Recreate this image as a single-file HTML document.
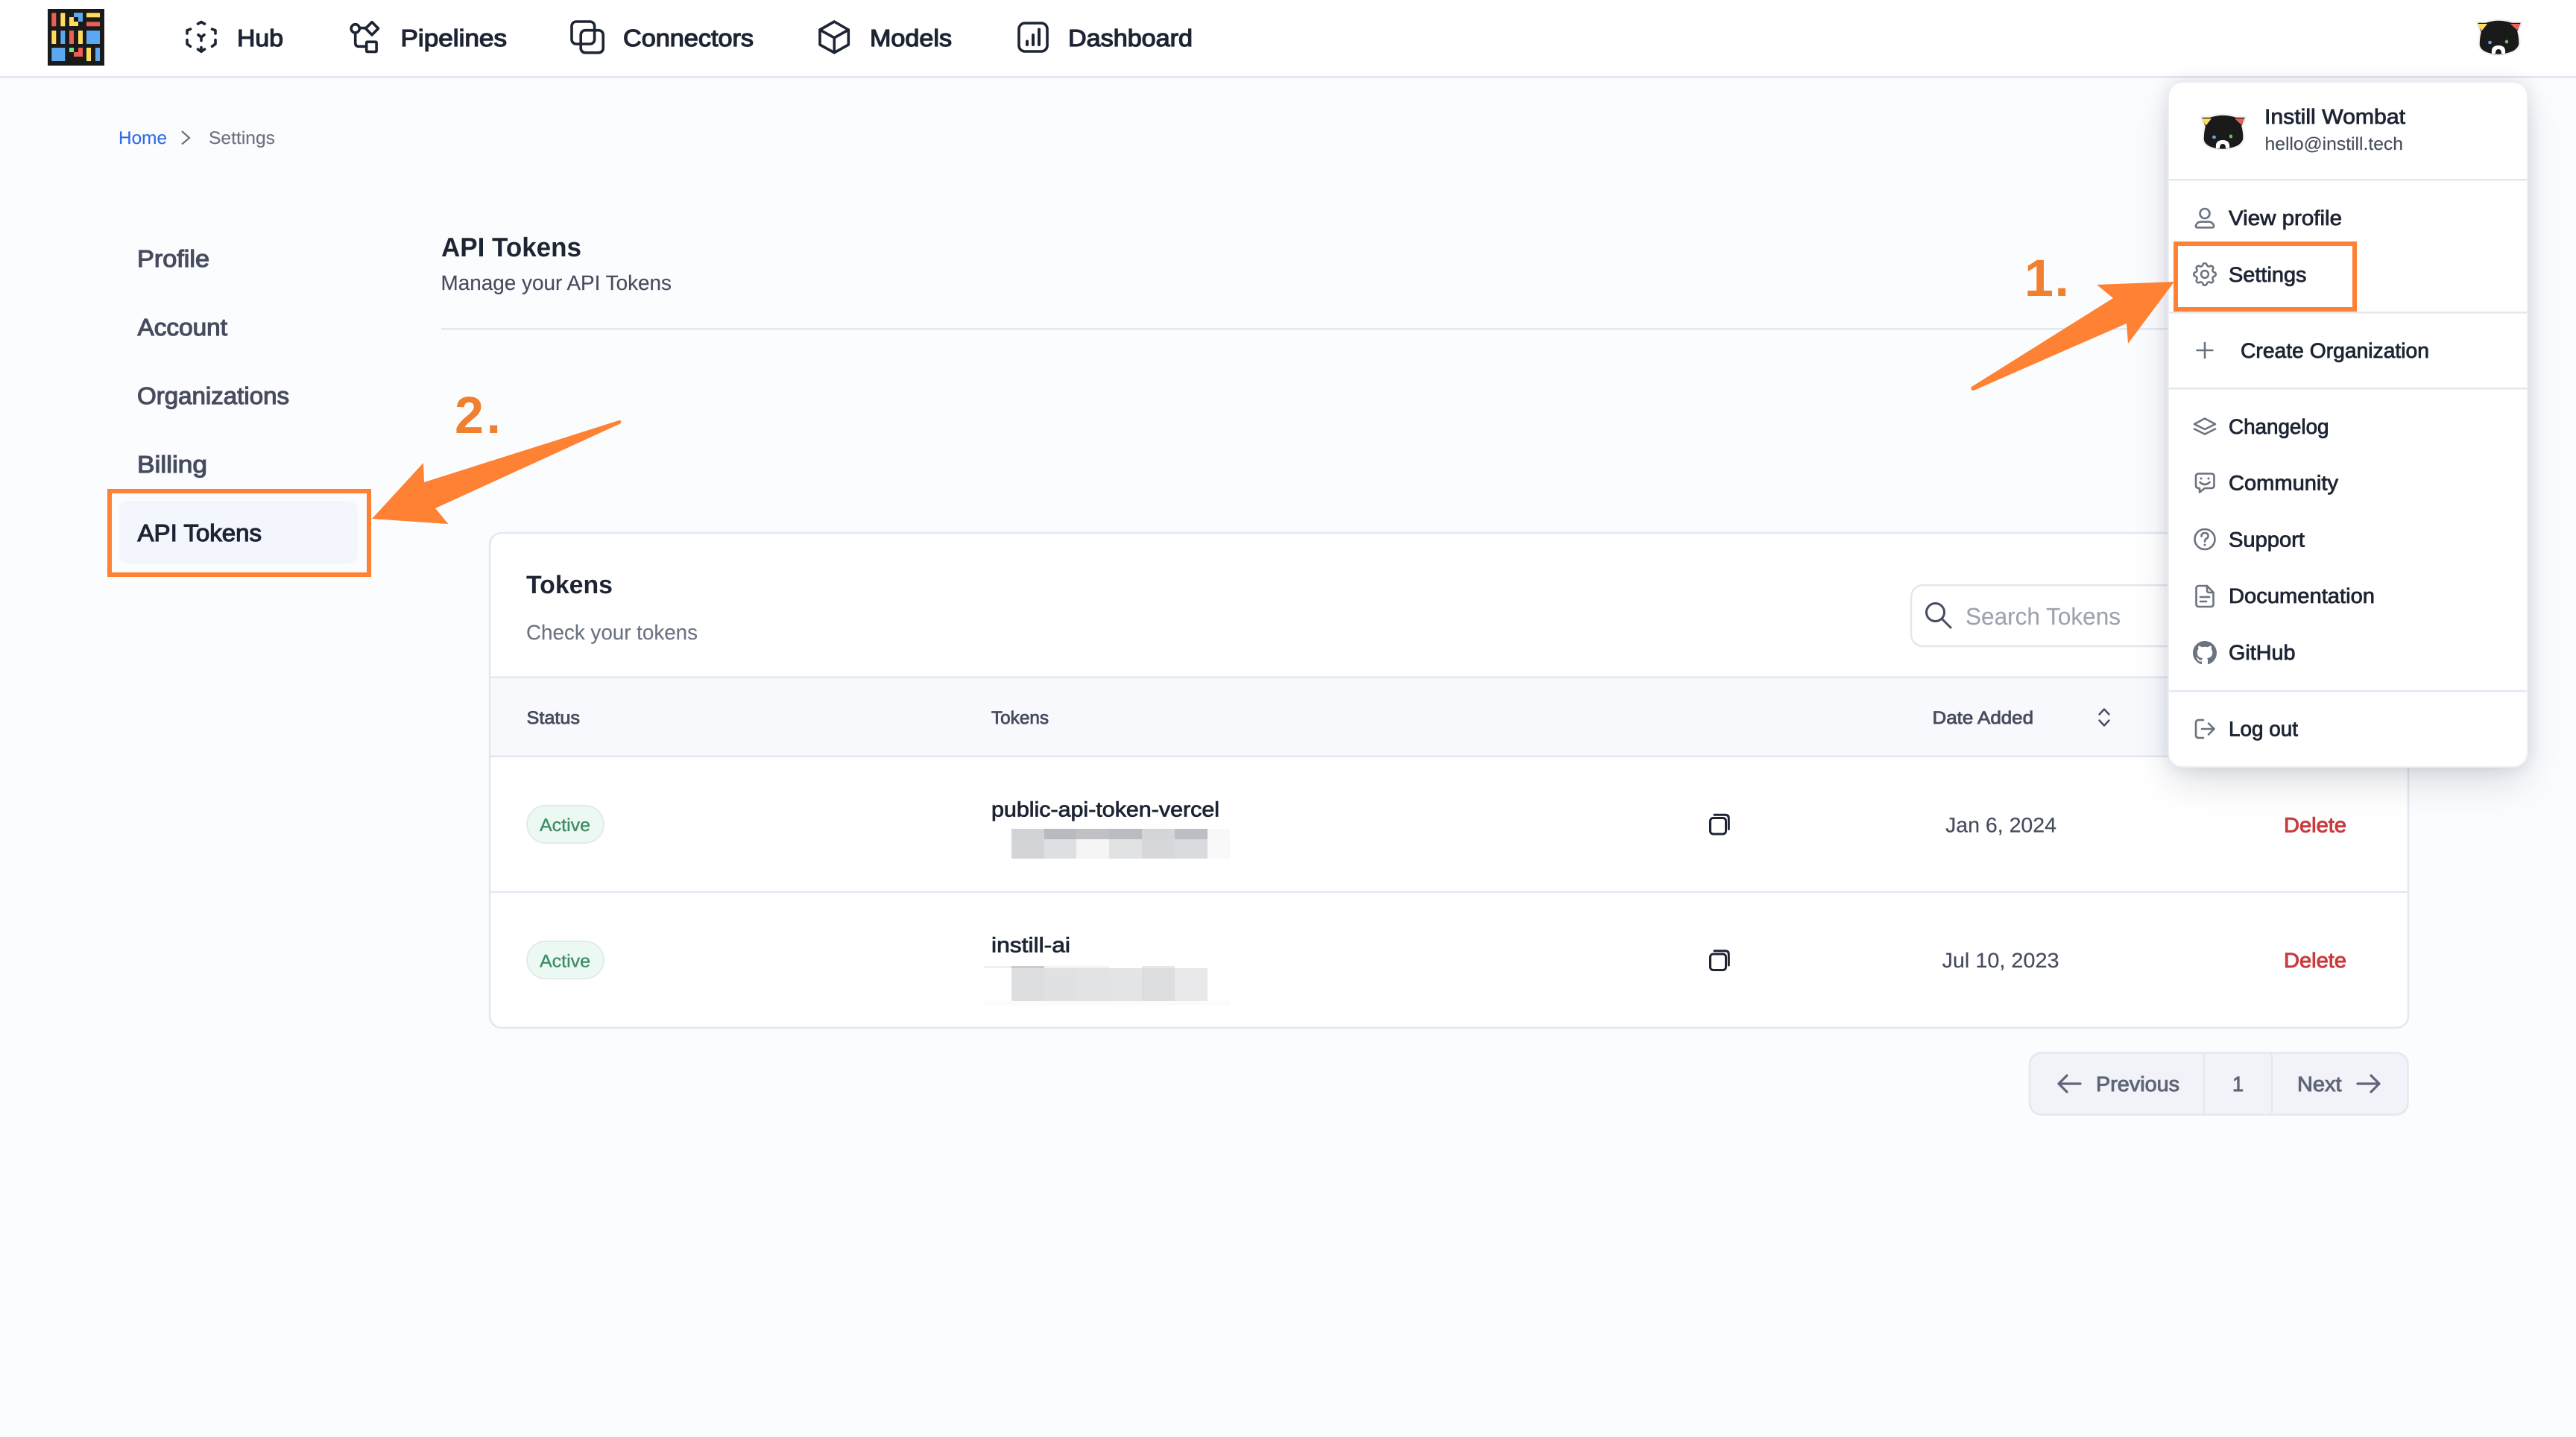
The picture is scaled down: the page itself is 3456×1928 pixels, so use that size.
<!DOCTYPE html>
<html lang="en">
<head>
<meta charset="utf-8">
<title>API Tokens</title>
<style>
html,body{margin:0;padding:0;width:3456px;height:1928px;overflow:hidden;background:#FBFCFE}
svg{position:absolute;left:0;top:0;display:block}
text{font-family:"Liberation Sans",sans-serif;text-rendering:geometricPrecision}
.nav{font-size:32px;fill:#1D2433;stroke:#1D2433;stroke-width:1.25}
.side{font-size:32px;fill:#464C5E;stroke:#464C5E;stroke-width:1.15}
.dark{font-size:32px;fill:#1D2433;stroke:#1D2433;stroke-width:1.15}
.crumb{font-size:24px;stroke-width:.15}
.h1{font-size:36px;font-weight:bold;fill:#1D2433}
.h2{font-size:34px;font-weight:bold;fill:#1D2433}
.sub{font-size:28px;fill:#464C5E;stroke:#464C5E;stroke-width:.15}
.th{font-size:24px;fill:#464C5E;stroke:#464C5E;stroke-width:.8}
.item{font-size:28px;fill:#1D2433;stroke:#1D2433;stroke-width:.8}
.date{font-size:28px;fill:#464C5E;stroke:#464C5E;stroke-width:.2}
.del{font-size:28px;fill:#C93A3F;stroke:#C93A3F;stroke-width:.95}
.act{font-size:24px;fill:#3C8C65;stroke:#3C8C65;stroke-width:.35}
.pg{font-size:28px;fill:#5F6577;stroke:#5F6577;stroke-width:.95}
.num{font-size:70px;font-weight:bold;fill:#F08030}
.ic{fill:none;stroke:#1D2433;stroke-width:3.6;stroke-linecap:round;stroke-linejoin:round}
.dd{fill:none;stroke:#6B7280;stroke-width:2.6;stroke-linecap:round;stroke-linejoin:round}
#panel{position:absolute;left:2908px;top:109px;width:484px;height:921px;box-sizing:border-box;background:#fff;border:2px solid #ECEEF3;border-radius:20px;box-shadow:0 22px 50px -6px rgba(30,40,70,.17),0 0 22px rgba(30,40,70,.11)}
</style>
</head>
<body>
<svg width="3456" height="1928" viewBox="0 0 3456 1928" xmlns="http://www.w3.org/2000/svg">
  <!-- Nav bar -->
  <rect x="0" y="0" width="3456" height="102" fill="#fff"/>
  <rect x="0" y="102" width="3456" height="2.5" fill="#E3E6EF"/>

  <!-- Logo -->
  <g transform="translate(64,12)">
    <rect width="76" height="76" fill="#1A1A1A"/>
    <rect x="5.3" y="5.3" width="6" height="18" fill="#EB5F54"/>
    <rect x="17.3" y="5.3" width="6" height="18" fill="#FFDD5C"/>
    <path d="M29 11h6v6h6v-6h-6V5h12v12h-6v6H29z" fill="#FFDD5C"/>
    <path d="M35 5h12v12H41v-6h-6z" fill="#5CA8F0"/>
    <rect x="35" y="11" width="6" height="6" fill="#1A1A1A"/>
    <rect x="52" y="5.3" width="18" height="6" fill="#FFDD5C"/>
    <rect x="52" y="17.3" width="18" height="6" fill="#EB5F54"/>
    <rect x="5.3" y="29" width="6" height="18" fill="#FFDD5C"/>
    <rect x="17.3" y="29" width="6" height="18" fill="#5CA8F0"/>
    <rect x="29" y="29" width="6" height="18" fill="#EB5F54"/>
    <rect x="41" y="29" width="6" height="18" fill="#FFDD5C"/>
    <rect x="52" y="29" width="18" height="18" fill="#5CA8F0"/>
    <rect x="5.3" y="52" width="18" height="18" fill="#5CA8F0"/>
    <rect x="29" y="52" width="6" height="6" fill="#72EB87"/>
    <path d="M41 52h6v12H35v-6h6z" fill="#EB5F54"/>
    <rect x="52" y="52" width="6" height="18" fill="#FFDD5C"/>
    <rect x="64" y="52" width="6" height="18" fill="#5CA8F0"/>
  </g>

  <!-- Nav icons -->
  <g class="ic">
    <path d="M266 46.7L270 50L274 46.7M270 50V54.5"/>
    <path d="M265.5 32L270 29.5L274.5 32"/>
    <path d="M251 45V40.8L255.5 39"/>
    <path d="M284.5 39L289 40.8V45"/>
    <path d="M251 53.5V59L255.5 62.3"/>
    <path d="M284.5 62.3L289 59V53.5"/>
    <path d="M265.5 66L270 69.3L274.5 66M270 63.5V69"/>
  </g>
  <g class="ic">
    <circle cx="476.7" cy="38.3" r="5.6"/>
    <path d="M482.3 37.6H490.5"/>
    <path d="M499 29.6L507.5 38.2L499 46.8L490.5 38.2Z"/>
    <path d="M476.7 44V57.5Q476.7 62.3 481.5 62.3H491.5"/>
    <rect x="491.7" y="56.2" width="13.4" height="13.2" rx="1"/>
  </g>
  <g class="ic">
    <rect x="767" y="29" width="30.6" height="30" rx="6"/>
    <rect x="779.2" y="40.7" width="30" height="30" rx="6"/>
  </g>
  <g class="ic">
    <path d="M1119.3 29L1138.3 40V60L1119.3 70.7L1100 60V40Z"/>
    <path d="M1100 40L1119.3 50.7L1138.3 40M1119.3 50.7V70.7"/>
  </g>
  <g class="ic">
    <rect x="1367" y="31" width="38" height="38" rx="8"/>
    <path d="M1378 55.5V60M1386 47V60M1394 39.5V60" stroke-width="4"/>
  </g>

  <!-- Nav labels -->
  <text class="nav" x="318" y="62" textLength="62" lengthAdjust="spacingAndGlyphs">Hub</text>
  <text class="nav" x="537.5" y="62" textLength="142.5" lengthAdjust="spacingAndGlyphs">Pipelines</text>
  <text class="nav" x="836" y="62" textLength="175" lengthAdjust="spacingAndGlyphs">Connectors</text>
  <text class="nav" x="1167" y="62" textLength="110" lengthAdjust="spacingAndGlyphs">Models</text>
  <text class="nav" x="1433" y="62" textLength="167" lengthAdjust="spacingAndGlyphs">Dashboard</text>

  <!-- Breadcrumb -->
  <text class="crumb" x="159" y="193" fill="#2F6BE8" stroke="#2F6BE8" textLength="65" lengthAdjust="spacingAndGlyphs">Home</text>
  <path d="M244 176L254 185L244 193.5" fill="none" stroke="#6B7280" stroke-width="2.2"/>
  <text class="crumb" x="280" y="193" fill="#6B7280" stroke="#6B7280" textLength="89" lengthAdjust="spacingAndGlyphs">Settings</text>

  <!-- Sidebar -->
  <rect x="160" y="672" width="320" height="84" rx="12" fill="#F3F6FD"/>
  <text class="side" x="184" y="358" textLength="97" lengthAdjust="spacingAndGlyphs">Profile</text>
  <text class="side" x="184.5" y="450" textLength="120.5" lengthAdjust="spacingAndGlyphs">Account</text>
  <text class="side" x="184" y="542" textLength="204" lengthAdjust="spacingAndGlyphs">Organizations</text>
  <text class="side" x="184" y="634" textLength="94" lengthAdjust="spacingAndGlyphs">Billing</text>
  <text class="dark" x="184.5" y="726" textLength="166.5" lengthAdjust="spacingAndGlyphs">API Tokens</text>

  <!-- Page head -->
  <text class="h1" x="592" y="344" textLength="188" lengthAdjust="spacingAndGlyphs">API Tokens</text>
  <text class="sub" x="591.5" y="389" textLength="309.5" lengthAdjust="spacingAndGlyphs">Manage your API Tokens</text>
  <rect x="592" y="440" width="2320" height="2.5" fill="#E3E7F0"/>

  <!-- Card -->
  <rect x="657" y="715" width="2574" height="664" rx="16" fill="#fff" stroke="#E3E7F0" stroke-width="2.5"/>
  <text class="h2" x="706" y="796" textLength="116" lengthAdjust="spacingAndGlyphs">Tokens</text>
  <text class="sub" x="706" y="858" style="fill:#6B7280;stroke:#6B7280" textLength="230" lengthAdjust="spacingAndGlyphs">Check your tokens</text>

  <rect x="2564" y="785" width="400" height="82" rx="16" fill="#fff" stroke="#E3E7F0" stroke-width="2.5"/>
  <circle cx="2596.5" cy="821.5" r="12" fill="none" stroke="#464C5E" stroke-width="3"/>
  <path d="M2605.5 830.5L2617 842" stroke="#464C5E" stroke-width="3" stroke-linecap="round"/>
  <text x="2637" y="838" font-size="32" fill="#9CA3AF" stroke="#9CA3AF" stroke-width=".15" textLength="208" lengthAdjust="spacingAndGlyphs">Search Tokens</text>

  <rect x="658.5" y="908.5" width="2571" height="106" fill="#F7F9FD"/>
  <rect x="658" y="907.5" width="2572" height="2.5" fill="#E3E7F0"/>
  <rect x="658" y="1013.5" width="2572" height="2.5" fill="#E3E7F0"/>
  <rect x="658" y="1195.5" width="2572" height="2.5" fill="#E3E7F0"/>

  <text class="th" x="706.5" y="971" textLength="71.5" lengthAdjust="spacingAndGlyphs">Status</text>
  <text class="th" x="1330" y="971" textLength="77" lengthAdjust="spacingAndGlyphs">Tokens</text>
  <text class="th" x="2592.5" y="971" textLength="135.5" lengthAdjust="spacingAndGlyphs">Date Added</text>
  <path d="M2816.5 958.5L2823 951.5L2829.5 958.5M2816.5 966.5L2823 973.5L2829.5 966.5" fill="none" stroke="#464C5E" stroke-width="2.4" stroke-linecap="round" stroke-linejoin="round"/>

  <!-- Row 1 -->
  <rect x="707" y="1081" width="103" height="50" rx="25" fill="#ECF9F3" stroke="#E3E9EC" stroke-width="2"/>
  <text class="act" x="724" y="1115" textLength="68" lengthAdjust="spacingAndGlyphs">Active</text>
  <text class="item" x="1330" y="1095.5" textLength="306" lengthAdjust="spacingAndGlyphs">public-api-token-vercel</text>
  <g>
    <rect x="1357" y="1112" width="44" height="14" fill="#D1D2D6"/>
    <rect x="1401" y="1112" width="43" height="14" fill="#B9BABF"/>
    <rect x="1444" y="1112" width="44" height="14" fill="#C0C1C5"/>
    <rect x="1488" y="1112" width="44" height="14" fill="#BBBCC1"/>
    <rect x="1532" y="1112" width="44" height="14" fill="#D4D5D8"/>
    <rect x="1576" y="1112" width="44" height="14" fill="#BDBEC3"/>
    <rect x="1620" y="1112" width="30" height="14" fill="#F8F8F9"/>
    <rect x="1357" y="1126" width="44" height="26" fill="#D3D4D7"/>
    <rect x="1401" y="1126" width="43" height="26" fill="#DEDFE2"/>
    <rect x="1444" y="1126" width="44" height="26" fill="#F5F5F6"/>
    <rect x="1488" y="1126" width="44" height="26" fill="#E1E2E4"/>
    <rect x="1532" y="1126" width="44" height="26" fill="#D6D7DA"/>
    <rect x="1576" y="1126" width="44" height="26" fill="#DADBDE"/>
    <rect x="1620" y="1126" width="30" height="26" fill="#F9F9FA"/>
  </g>
  <g fill="none" stroke="#1D2433" stroke-width="3" stroke-linecap="round">
    <rect x="2294.5" y="1097.5" width="21" height="21.5" rx="4"/>
    <path d="M2300 1093.3H2314.5Q2319.3 1093.3 2319.3 1098V1112.5"/>
  </g>
  <text class="date" x="2610" y="1116.5" textLength="149" lengthAdjust="spacingAndGlyphs">Jan 6, 2024</text>
  <text class="del" x="3064" y="1116.5" textLength="84" lengthAdjust="spacingAndGlyphs">Delete</text>

  <!-- Row 2 -->
  <rect x="707" y="1263" width="103" height="50" rx="25" fill="#ECF9F3" stroke="#E3E9EC" stroke-width="2"/>
  <text class="act" x="724" y="1297.5" textLength="68" lengthAdjust="spacingAndGlyphs">Active</text>
  <text class="item" x="1330" y="1277.5" textLength="106" lengthAdjust="spacingAndGlyphs">instill-ai</text>
  <g>
    <rect x="1320" y="1296" width="37" height="3" fill="#F0F0F1"/>
    <rect x="1357" y="1296" width="44" height="3" fill="#C9CACD"/>
    <rect x="1401" y="1296" width="87" height="3" fill="#F3F3F4"/>
    <rect x="1532" y="1296" width="44" height="3" fill="#E6E7E9"/>
    <rect x="1357" y="1299" width="44" height="44" fill="#DDDEE0"/>
    <rect x="1401" y="1299" width="43" height="44" fill="#E0E1E3"/>
    <rect x="1444" y="1299" width="44" height="44" fill="#E2E3E5"/>
    <rect x="1488" y="1299" width="44" height="44" fill="#E3E4E6"/>
    <rect x="1532" y="1299" width="44" height="44" fill="#DCDDDF"/>
    <rect x="1576" y="1299" width="44" height="44" fill="#E9E9EB"/>
    <rect x="1320" y="1343" width="330" height="6" fill="#FBFBFC"/>
  </g>
  <g fill="none" stroke="#1D2433" stroke-width="3" stroke-linecap="round">
    <rect x="2294.5" y="1280" width="21" height="21.5" rx="4"/>
    <path d="M2300 1275.8H2314.5Q2319.3 1275.8 2319.3 1280.5V1295"/>
  </g>
  <text class="date" x="2605.5" y="1298" textLength="157" lengthAdjust="spacingAndGlyphs">Jul 10, 2023</text>
  <text class="del" x="3064" y="1298" textLength="84" lengthAdjust="spacingAndGlyphs">Delete</text>

  <!-- Pagination -->
  <rect x="2723" y="1412.5" width="507.5" height="83" rx="16" fill="#F1F3F9" stroke="#E3E7F0" stroke-width="2.5"/>
  <rect x="2956" y="1413" width="2" height="82" fill="#E3E7F0"/>
  <rect x="3047" y="1413" width="2" height="82" fill="#E3E7F0"/>
  <path d="M2791 1454H2762M2773 1443L2762 1454L2773 1465" fill="none" stroke="#5F6577" stroke-width="3.2" stroke-linecap="round" stroke-linejoin="round"/>
  <text class="pg" x="2812" y="1464" textLength="112" lengthAdjust="spacingAndGlyphs">Previous</text>
  <text class="pg" x="2995" y="1464" textLength="15" lengthAdjust="spacingAndGlyphs">1</text>
  <text class="pg" x="3082" y="1464" textLength="59.5" lengthAdjust="spacingAndGlyphs">Next</text>
  <path d="M3163 1454H3192M3181 1443L3192 1454L3181 1465" fill="none" stroke="#5F6577" stroke-width="3.2" stroke-linecap="round" stroke-linejoin="round"/>

  <!-- Header avatar -->
  <g transform="translate(3321,25)">
    <path d="M1.5 4.5L14 4.5Q23 1.5 31 1.5Q40 1.5 49 4.5L62.5 4.5L57.5 17Q60 27 59.5 35Q57 42 50 45Q40 49 31 49Q20 49 12 45Q5 41 4.5 35Q4.5 26 6.5 18Z" fill="#1A1A1A" stroke="#F1F2F3" stroke-width="2.5" stroke-linejoin="round"/>
    <path d="M2.5 7H16L8.5 16.5Z" fill="#FFDD5C"/>
    <path d="M47 7H60.6L56 15.5Z" fill="#EB5F54"/>
    <ellipse cx="19.5" cy="32" rx="2.4" ry="2.3" fill="#5CA8F0"/>
    <ellipse cx="42" cy="31" rx="2.2" ry="2.5" fill="#6CBF5F"/>
    <path d="M22 47Q20.5 36 31 36Q41.5 36 40 47Z" fill="#fff"/>
    <path d="M27 47Q27 41 31 41Q35 41 35 47Z" fill="#1A1A1A"/>
  </g>
</svg>

<div id="panel"></div>

<svg width="3456" height="1928" viewBox="0 0 3456 1928" xmlns="http://www.w3.org/2000/svg">
  <!-- Panel avatar -->
  <g transform="translate(2951,152)">
    <path d="M1.5 4.5L14 4.5Q23 1.5 31 1.5Q40 1.5 49 4.5L62.5 4.5L57.5 17Q60 27 59.5 35Q57 42 50 45Q40 49 31 49Q20 49 12 45Q5 41 4.5 35Q4.5 26 6.5 18Z" fill="#1A1A1A" stroke="#F1F2F3" stroke-width="2.5" stroke-linejoin="round"/>
    <path d="M2.5 7H16L8.5 16.5Z" fill="#FFDD5C"/>
    <path d="M47 7H60.6L56 15.5Z" fill="#EB5F54"/>
    <ellipse cx="19.5" cy="32" rx="2.4" ry="2.3" fill="#5CA8F0"/>
    <ellipse cx="42" cy="31" rx="2.2" ry="2.5" fill="#6CBF5F"/>
    <path d="M22 47Q20.5 36 31 36Q41.5 36 40 47Z" fill="#fff"/>
    <path d="M27 47Q27 41 31 41Q35 41 35 47Z" fill="#1A1A1A"/>
  </g>
  <text class="item" x="3038" y="166" textLength="189" lengthAdjust="spacingAndGlyphs">Instill Wombat</text>
  <text x="3038.5" y="201" font-size="24" fill="#464C5E" stroke="#464C5E" stroke-width=".15" textLength="185.5" lengthAdjust="spacingAndGlyphs">hello@instill.tech</text>

  <rect x="2910" y="240" width="480" height="2.5" fill="#E3E7F0"/>
  <rect x="2910" y="418" width="480" height="2.5" fill="#E3E7F0"/>
  <rect x="2910" y="520" width="480" height="2.5" fill="#E3E7F0"/>
  <rect x="2910" y="926" width="480" height="2.5" fill="#E3E7F0"/>

  <!-- Menu labels -->
  <text class="item" x="2990" y="302" textLength="152" lengthAdjust="spacingAndGlyphs">View profile</text>
  <text class="item" x="2990" y="378" textLength="104.5" lengthAdjust="spacingAndGlyphs">Settings</text>
  <text class="item" x="3006" y="480" textLength="253" lengthAdjust="spacingAndGlyphs">Create Organization</text>
  <text class="item" x="2990" y="582" textLength="134.5" lengthAdjust="spacingAndGlyphs">Changelog</text>
  <text class="item" x="2990" y="657.5" textLength="147" lengthAdjust="spacingAndGlyphs">Community</text>
  <text class="item" x="2990" y="733.5" textLength="102" lengthAdjust="spacingAndGlyphs">Support</text>
  <text class="item" x="2990" y="809" textLength="196" lengthAdjust="spacingAndGlyphs">Documentation</text>
  <text class="item" x="2990" y="885" textLength="89.5" lengthAdjust="spacingAndGlyphs">GitHub</text>
  <text class="item" x="2990" y="987.5" textLength="93" lengthAdjust="spacingAndGlyphs">Log out</text>

  <!-- Menu icons -->
  <g class="dd">
    <circle cx="2958" cy="286.5" r="6.5"/>
    <path d="M2948.5 305.3Q2945 305.3 2946.2 302Q2948 297.6 2953 297.6H2963Q2968 297.6 2969.8 302Q2971 305.3 2967.5 305.3Z"/>
  </g>
  <g transform="translate(2938.3,348.3) scale(1.64)" fill="none" stroke="#6B7280" stroke-width="1.55" stroke-linejoin="round">
    <path d="M10.325 4.317c.426-1.756 2.924-1.756 3.35 0a1.724 1.724 0 002.573 1.066c1.543-.94 3.31.826 2.37 2.37a1.724 1.724 0 001.065 2.572c1.756.426 1.756 2.924 0 3.35a1.724 1.724 0 00-1.066 2.573c.94 1.543-.826 3.31-2.37 2.37a1.724 1.724 0 00-2.572 1.065c-.426 1.756-2.924 1.756-3.35 0a1.724 1.724 0 00-2.573-1.066c-1.543.94-3.31-.826-2.37-2.37a1.724 1.724 0 00-1.065-2.572c-1.756-.426-1.756-2.924 0-3.35a1.724 1.724 0 001.066-2.573c-.94-1.543.826-3.31 2.37-2.37.996.608 2.296.07 2.572-1.065z"/>
    <circle cx="12" cy="12" r="3"/>
  </g>
  <path class="dd" d="M2958 460V480M2947.5 470H2968.5"/>
  <g class="dd">
    <path d="M2958 561.5L2972 569L2958 576L2944 569Z"/>
    <path d="M2944 575.5L2958 582.5L2972 575.5"/>
  </g>
  <g class="dd">
    <path d="M2950 635.5H2966.5Q2970.5 635.5 2970.5 639.5V651Q2970.5 655 2966.5 655H2958L2951 660.5V655H2950Q2946 655 2946 651V639.5Q2946 635.5 2950 635.5Z"/>
    <path d="M2951.5 647Q2958 653 2964.5 647"/>
  </g>
  <circle cx="2953" cy="642" r="1.5" fill="#6B7280"/>
  <circle cx="2963" cy="642" r="1.5" fill="#6B7280"/>
  <g class="dd">
    <circle cx="2958" cy="723.5" r="13.5"/>
    <path d="M2953.5 719.5Q2953.5 715 2958 715Q2962.5 715 2962.5 719Q2962.5 721.5 2960 722.8Q2958 724 2958 726.5"/>
  </g>
  <circle cx="2958" cy="731" r="1.5" fill="#6B7280"/>
  <g class="dd">
    <path d="M2950 786H2961L2969.5 795V810.5Q2969.5 814 2966 814H2950Q2946.5 814 2946.5 810.5V789.5Q2946.5 786 2950 786Z"/>
    <path d="M2961 786V792Q2961 795 2964 795H2969.5"/>
    <path d="M2952 801H2964M2952 807H2960"/>
  </g>
  <g transform="translate(2942,860) scale(2)">
    <path fill="#6B7280" d="M8 0C3.58 0 0 3.58 0 8c0 3.54 2.29 6.53 5.47 7.59.4.07.55-.17.55-.38 0-.19-.01-.82-.01-1.49-2.01.37-2.53-.49-2.69-.94-.09-.23-.48-.94-.82-1.13-.28-.15-.68-.52-.01-.53.63-.01 1.08.58 1.23.82.72 1.21 1.87.87 2.33.66.07-.52.28-.87.51-1.07-1.78-.2-3.64-.89-3.64-3.95 0-.87.31-1.59.82-2.15-.08-.2-.36-1.02.08-2.12 0 0 .67-.21 2.2.82.64-.18 1.32-.27 2-.27s1.36.09 2 .27c1.53-1.04 2.2-.82 2.2-.82.44 1.1.16 1.92.08 2.12.51.56.82 1.27.82 2.15 0 3.07-1.87 3.75-3.65 3.95.29.25.54.73.54 1.48 0 1.07-.01 1.93-.01 2.2 0 .21.15.46.55.38A8.01 8.01 0 0016 8c0-4.42-3.58-8-8-8z"/>
  </g>
  <g class="dd">
    <path d="M2956 966H2950Q2946 966 2946 970V986Q2946 990 2950 990H2956"/>
    <path d="M2954 978H2970.5M2963 970.5L2970.5 978L2963 985.5"/>
  </g>

  <!-- Annotations -->
  <rect x="147" y="659" width="348" height="112" fill="none" stroke="#FF8133" stroke-width="6"/>
  <rect x="2919" y="327" width="240" height="88" fill="none" stroke="#FF8133" stroke-width="6"/>

  <path d="M2645 519L2835 400L2813 382L2917 378L2855 461L2853 434L2650 523Q2646 525 2644.5 522.5Q2644 520.5 2645 519Z" fill="#FF8133"/>
  <path d="M829 564.5Q832 563 833 565Q834 567 832 568.5L584 682L601.5 703L499 696L568 621L569 647Z" fill="#FF8133"/>

  <text class="num" x="2716" y="397" textLength="60" lengthAdjust="spacing">1.</text>
  <text class="num" x="610" y="581" textLength="62" lengthAdjust="spacing">2.</text>
</svg>
</body>
</html>
